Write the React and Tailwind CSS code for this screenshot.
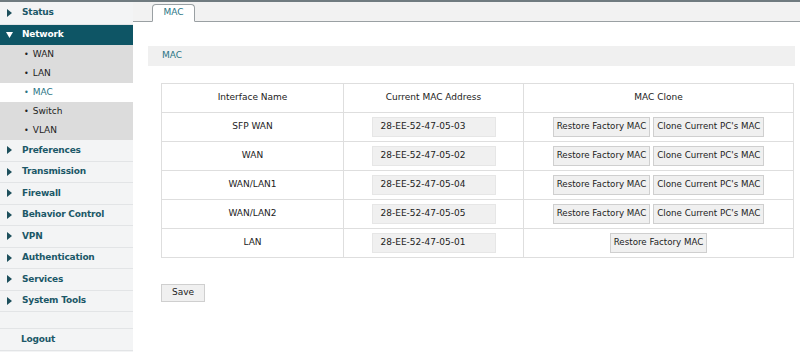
import React from "react";

const font = { fontFamily: '"DejaVu Sans", Verdana, sans-serif' };

function Tri({ down, white }) {
  return (
    <svg width="7" height="8" viewBox="0 0 7 8" className="shrink-0">
      {down ? (
        <polygon points="0,1 7,1 3.5,7" fill={white ? "#ffffff" : "#1d4f5c"} />
      ) : (
        <polygon points="1,0 6,4 1,8" fill="#1d4f5c" />
      )}
    </svg>
  );
}

function MainItem({ label, h = "h-[21.5px]" }) {
  return (
    <div className={`${h} flex items-center pl-[6px] border-b border-[#e2e4e6] text-[#1b5868] font-bold text-[9px] tracking-[-0.2px]`}>
      <Tri />
      <span className="ml-[9px]">{label}</span>
    </div>
  );
}

function SubItem({ label, active }) {
  return (
    <div
      className={`h-[19px] flex items-center pl-[24px] text-[9px] ${
        active ? "bg-white text-[#2a7585]" : "bg-[#dcdcdc] text-[#222]"
      }`}
    >
      <span className="mr-[4px] text-[8px]">•</span>
      {label}
    </div>
  );
}

const rows = [
  ["SFP WAN", "28-EE-52-47-05-03", true],
  ["WAN", "28-EE-52-47-05-02", true],
  ["WAN/LAN1", "28-EE-52-47-05-04", true],
  ["WAN/LAN2", "28-EE-52-47-05-05", true],
  ["LAN", "28-EE-52-47-05-01", false],
];

function Btn({ children }) {
  return (
    <span className="inline-flex items-center h-[20px] px-[3px] bg-[#f0f0f0] border border-[#cfcfcf] text-[8.7px] text-[#222]">
      {children}
    </span>
  );
}

export default function App() {
  return (
    <div style={font} className="w-[800px] h-[352px] bg-white flex border-t-2 border-[#707b80] overflow-hidden">
      <div className="w-[133px] shrink-0 bg-[#f3f4f5] flex flex-col">
        <MainItem label="Status" h="h-[23px]" />
        <div className="h-[20px] flex items-center pl-[6px] bg-[#0e5565] text-white font-bold text-[9px] tracking-[-0.2px]">
          <Tri down white />
          <span className="ml-[9px]">Network</span>
        </div>
        <SubItem label="WAN" />
        <SubItem label="LAN" />
        <SubItem label="MAC" active />
        <SubItem label="Switch" />
        <SubItem label="VLAN" />
        <MainItem label="Preferences" />
        <MainItem label="Transmission" />
        <MainItem label="Firewall" />
        <MainItem label="Behavior Control" />
        <MainItem label="VPN" />
        <MainItem label="Authentication" />
        <MainItem label="Services" />
        <MainItem label="System Tools" />
        <div className="h-[17px] border-b border-[#e2e4e6]"></div>
        <div className="h-[21.5px] flex items-center pl-[21px] border-b border-[#e2e4e6] text-[#1b5868] font-bold text-[9px] tracking-[-0.2px]">
          Logout
        </div>
      </div>
      <div className="flex-1 flex flex-col">
        <div className="h-[20px] bg-[#f2f2f2] border-b border-[#9aa0a3] flex items-end pl-[19px]">
          <div className="w-[43px] h-[18px] -mb-px bg-white border border-[#9aa0a3] border-b-white rounded-t-[4px] flex items-center justify-center text-[9px] text-[#2a7585]">
            MAC
          </div>
        </div>
        <div className="pl-[15px] pr-[5px] pt-[24px]">
          <div className="h-[20px] bg-[#f0f0f0] flex items-center pl-[14px] text-[9px] text-[#2a7585]">
            MAC
          </div>
        </div>
        <div className="pl-[28px] pr-[6px] pt-[17px]">
          <table className="w-[633px] border-collapse text-[9px] text-[#222]">
            <thead>
              <tr className="h-[29px]">
                <th className="w-[182px] border border-[#dedede] font-normal">Interface Name</th>
                <th className="w-[180px] border border-[#dedede] font-normal">Current MAC Address</th>
                <th className="border border-[#dedede] font-normal">MAC Clone</th>
              </tr>
            </thead>
            <tbody>
              {rows.map(([name, mac, clone]) => (
                <tr key={name} className="h-[29px]">
                  <td className="border border-[#dedede] text-center">{name}</td>
                  <td className="border border-[#dedede] text-center">
                    <span className="inline-flex items-center w-[124px] h-[20px] pl-[8px] bg-[#f0f0f0] border border-[#e6e6e6]">
                      {mac}
                    </span>
                  </td>
                  <td className="border border-[#dedede] text-center">
                    <div className="flex justify-center gap-[3px]">
                      <Btn>Restore Factory MAC</Btn>
                      {clone && <Btn>Clone Current PC's MAC</Btn>}
                    </div>
                  </td>
                </tr>
              ))}
            </tbody>
          </table>
          <div className="pt-[20px]">
            <span className="inline-flex items-center justify-center w-[44px] h-[18px] bg-[#f0f0f0] border border-[#cfcfcf] text-[9px] text-[#222]">
              Save
            </span>
          </div>
        </div>
      </div>
    </div>
  );
}
